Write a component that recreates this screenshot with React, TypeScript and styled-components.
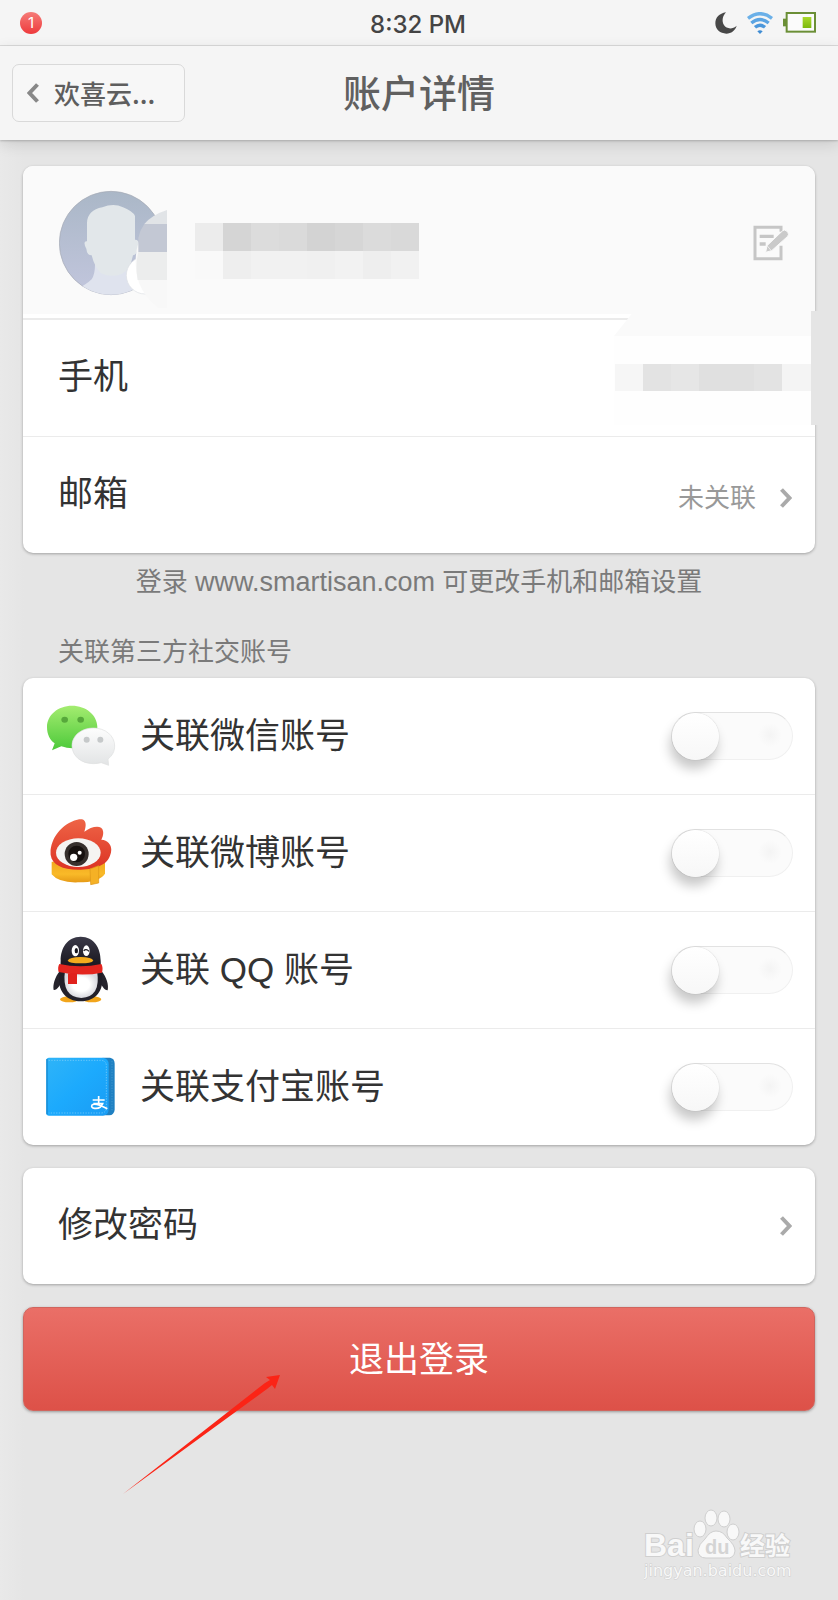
import React from "react";
import styled, { createGlobalStyle } from "styled-components";

const GlobalStyle = createGlobalStyle`
  * { box-sizing: border-box; }
  body {
    margin: 0;
    background: #e5e5e5;
    color: #333;
    font-family: "Liberation Sans", "Noto Sans CJK SC", sans-serif;
    -webkit-font-smoothing: antialiased;
  }
  h1, h2, p { margin: 0; }
  svg { display: block; flex: none; }
`;

const Page = styled.div`
  position: relative;
  min-height: 100vh;
  background: linear-gradient(90deg, #e9e9e9 0, #e5e5e5 24px, #e5e5e5 100%);
`;

const StatusBar = styled.div`
  display: grid;
  grid-template-columns: 1fr auto 1fr;
  align-items: center;
  height: 46px;
  padding: 0 22px 0 20px;
  background: #f5f5f5;
  border-bottom: 1px solid #dcdcdc;
`;

const Badge = styled.span`
  display: flex;
  align-items: center;
  justify-content: center;
  width: 22px;
  height: 22px;
  border-radius: 50%;
  background: linear-gradient(#f57c78, #ee3a3c);
  color: #fff;
  font: 15px/22px Inter, sans-serif;
`;

const Time = styled.time`
  padding-top: 4px;
  color: #444;
  font: 500 24px/30px Inter, sans-serif;
`;

const StatusIcons = styled.div`
  display: flex;
  align-items: center;
  justify-content: flex-end;
  gap: 10px;
`;

const Header = styled.header`
  position: relative;
  display: grid;
  grid-template-columns: 1fr auto 1fr;
  align-items: center;
  height: 94px;
  padding: 0 12px;
  background: #f5f5f5;
  box-shadow: 0 1px 2px rgba(0, 0, 0, 0.2), 0 4px 14px rgba(0, 0, 0, 0.12);
`;

const BackButton = styled.button`
  display: flex;
  align-items: center;
  justify-self: start;
  gap: 15px;
  width: 173px;
  height: 58px;
  padding: 0 14px;
  border: 1px solid #d9d9d9;
  border-radius: 7px;
  background: #f7f7f7;
  color: #5e5e5e;
  font: 500 26px/36px "Noto Sans CJK SC", sans-serif;
`;

const Title = styled.h1`
  padding-top: 2px;
  color: #606060;
  font-size: 38px;
  font-weight: 500;
  line-height: 54px;
`;

const Content = styled.main`
  display: flex;
  flex-direction: column;
  padding: 26px 23px 24px;
`;

const Card = styled.section`
  position: relative;
  border-radius: 10px;
  background: #fff;
  box-shadow: 0 1px 3px rgba(0, 0, 0, 0.3);
`;

const Row = styled.div<{ $inset?: number }>`
  position: relative;
  display: flex;
  align-items: center;
  justify-content: space-between;
  height: 117px;
  padding: 0 22px 0 ${(p) => p.$inset ?? 35}px;
  border-bottom: 1px solid #ebebeb;
  &:last-child {
    height: 116px;
    border-bottom: 0;
  }
`;

const ProfileRow = styled(Row)`
  height: 154px;
  padding-right: 26px;
  border-bottom: 2px solid #ebebeb;
  border-radius: 10px 10px 0 0;
  background: #fafafa;
  box-shadow: inset 0 -4px 0 #fff;
`;

const Profile = styled.div`
  display: flex;
  align-items: flex-start;
  gap: 24px;
  padding: 12px 0 0 1px;
`;

const NameBlock = styled.div`
  padding-top: 35px;
`;

const IconButton = styled.button`
  padding: 2px 0 0;
  border: 0;
  background: none;
`;

const Label = styled.span`
  padding-bottom: 2px;
  font-size: 35px;
  line-height: 50px;
`;

const SwitchLabel = styled.label`
  display: flex;
  align-items: center;
  gap: 24px;
  font-size: 35px;
  line-height: 50px;
`;

const Value = styled.span`
  display: flex;
  align-items: center;
  gap: 24px;
  padding: 6px 1px 0 0;
  color: #999;
  font-size: 26px;
  line-height: 38px;
`;

const MaskedPhone = styled.span`
  position: absolute;
  top: -9px;
  right: -23px;
`;

const Hint = styled.p`
  padding: 10px 0;
  color: #7a7a7a;
  font-size: 26px;
  line-height: 38px;
  text-align: center;
`;

const HintLink = styled.a`
  color: inherit;
  font-size: 27px;
  text-decoration: none;
`;

const SectionTitle = styled.h2`
  padding: 22px 36px 7px 35px;
  color: #7a7a7a;
  font-size: 26px;
  font-weight: 400;
  line-height: 38px;
`;

const Switch = styled.input`
  appearance: none;
  flex: none;
  width: 122px;
  height: 48px;
  margin: 0;
  border: 1px solid #f0f0f0;
  border-top-color: #e2e2e2;
  border-radius: 24px;
  background: radial-gradient(circle at 98px 22px, #f4f4f4 0, #fbfbfb 12px);
  &::before {
    content: "";
    display: block;
    width: 47px;
    height: 47px;
    border-radius: 50%;
    background: linear-gradient(#fff, #f7f7f7);
    box-shadow: 0 0 1px rgba(0, 0, 0, 0.3), -2px 9px 12px rgba(0, 0, 0, 0.22);
  }
  &:checked::before {
    margin-left: auto;
  }
`;

const Stack = styled.div`
  position: relative;
  display: flex;
  flex-direction: column;
  gap: 23px;
  padding-top: 23px;
`;

const NavButton = styled.button`
  display: flex;
  align-items: center;
  justify-content: space-between;
  width: 100%;
  height: 116px;
  padding: 0 23px 0 35px;
  border: 0;
  background: none;
  color: #333;
  font-family: inherit;
`;

const LogoutButton = styled.button`
  height: 104px;
  padding-top: 3px;
  border: 1px solid #d0655e;
  border-radius: 10px;
  background: linear-gradient(#ea6f67, #dd5148);
  box-shadow: 0 1px 3px rgba(0, 0, 0, 0.35);
  color: #fff;
  font: 35px/50px "Liberation Sans", "Noto Sans CJK SC", sans-serif;
`;

const Pointer = styled.svg`
  position: absolute;
  left: 100px;
  bottom: -84px;
  pointer-events: none;
`;

const Watermark = styled.svg`
  position: absolute;
  right: 38px;
  bottom: 15px;
`;

const Chevron = ({ back = false }: { back?: boolean }) => (
  <svg width="12" height="20" viewBox="0 0 12 20" fill="none" stroke={back ? "#888" : "#aaa"} strokeWidth="4">
    <path d={back ? "M10.5 1.5 2.5 10l8 8.5" : "M1.5 1.5 9.5 10l-8 8.5"} />
  </svg>
);

const MoonIcon = () => (
  <svg width="22" height="22" viewBox="0 0 64 64">
    <path d="M32 1C12 4 1 17 1 33C1 51 15 63 33 63C47 63 59 54 63 40C50 52 33 49 26 38C19 26 22 12 32 1Z" fill="#484848" />
  </svg>
);

const WifiIcon = () => (
  <svg width="26" height="22" viewBox="0 0 78 66" fill="none" strokeWidth="10">
    <path d="M3 19Q39-9 75 19" stroke="#6bb0e8" />
    <path d="M13 33Q39 12 65 33" stroke="#5ba4e2" />
    <path d="M24 46Q39 33 54 46" stroke="#4c97db" />
    <path d="M31 58Q39 51 47 58L39 66Z" fill="#3f8cd3" stroke="none" />
  </svg>
);

const BatteryIcon = () => (
  <svg width="33" height="21" viewBox="0 0 99 63">
    <defs>
      <linearGradient id="charge" x1="0" y1="0" x2="0" y2="1">
        <stop offset="0" stopColor="#a9d92c" />
        <stop offset="1" stopColor="#7db80c" />
      </linearGradient>
    </defs>
    <path d="M0 20h9v23H0z" fill="#6b8f36" />
    <rect x="11" y="3" width="85" height="56" fill="#fbfbfb" stroke="#6b8f36" strokeWidth="6" />
    <rect x="59" y="15" width="26" height="33" fill="url(#charge)" />
  </svg>
);

const EditIcon = () => (
  <svg width="36" height="36" viewBox="0 0 108 108">
    <path d="M84 62V101H6V7H84V20" fill="none" stroke="#c6c6c6" strokeWidth="9" />
    <path d="M20 34h42M20 57h18" stroke="#c6c6c6" strokeWidth="10" />
    <path d="m38 82 4-20 46-44q6-6 13 0l4 5q4 6-2 12L56 77Z" fill="#cacaca" stroke="#fafafa" strokeWidth="3" />
    <path d="m42 62 13 15" stroke="#fafafa" strokeWidth="2" />
  </svg>
);

const Avatar = () => (
  <svg width="112" height="120" viewBox="0 0 336 360">
    <defs>
      <linearGradient id="avatarBack" x1="0" y1="0" x2="0" y2="1">
        <stop offset="0" stopColor="#aab7c7" />
        <stop offset="1" stopColor="#c2c6dd" />
      </linearGradient>
      <clipPath id="avatarClip">
        <circle cx="156" cy="165" r="155" />
      </clipPath>
    </defs>
    <circle cx="156" cy="165" r="155" fill="url(#avatarBack)" stroke="#a5a9b3" strokeWidth="2" />
    <g clipPath="url(#avatarClip)">
      <path d="M50 306Q84 288 98 274Q108 258 108 230L216 230V284Q250 300 290 320V350H50Z" fill="#dfe3ee" />
      <path d="M84 104Q86 66 130 58Q164 44 192 58Q222 70 228 84V155Q244 154 236 180Q234 202 222 202Q214 246 188 258Q156 270 126 256Q106 236 98 202Q84 202 82 182Q70 158 84 160Z" fill="#e2e7ea" />
    </g>
    <circle cx="258" cy="262" r="56" fill="#fff" stroke="#dcdfe4" strokeWidth="2" />
    <path d="M324 66V360H300Q232 310 230 230Q226 120 324 66Z" fill="#f8f8f8" />
    <path d="M238 150V192H324V108H256Q242 128 238 150Z" fill="#c3c8d4" />
    <path d="M324 66V108H256Q280 80 324 66Z" fill="#e1e4e7" />
    <path d="M238 192H324V276H236Q228 230 238 192Z" fill="#eceded" />
  </svg>
);

const nameTop = ["#ececec", "#d5d5d5", "#dcdcdc", "#dadada", "#d3d3d3", "#d6d6d6", "#dbdbdb", "#d9d9d9"];
const nameBottom = ["#f9f9f9", "#eeeeee", "#f1f1f1", "#f1f1f1", "#f0f0f0", "#f2f2f2", "#eeeeee", "#f1f1f1"];

const MaskedName = () => (
  <svg width="224" height="56" viewBox="0 0 224 56" role="img" aria-label="用户名">
    {nameTop.map((c, i) => (
      <rect key={i} x={i * 28} width="28" height="28" fill={c} />
    ))}
    {nameBottom.map((c, i) => (
      <rect key={i} x={i * 28} y="28" width="28" height="28" fill={c} />
    ))}
  </svg>
);

const MaskedNumber = () => (
  <svg width="226" height="114" viewBox="0 0 226 114" role="img" aria-label="手机号">
    <path d="M22 0H199V25H2Z" fill="#fafafa" />
    <path d="M2 25H199V114H2Z" fill="#fefefe" />
    <path d="M3 53H31V80H3z" fill="#f6f6f6" />
    <path d="M31 53H170V80H31z" fill="#e3e3e3" />
    <path d="M59 53H87V80H59z" fill="#e6e6e6" />
    <path d="M87 53H142V80H87z" fill="#e0e0e0" />
    <path d="M170 53H199V80H170z" fill="#f4f4f4" />
    <path d="M199 0H226V114H199z" fill="#e5e5e5" />
  </svg>
);

const WechatIcon = () => (
  <svg width="70" height="70" viewBox="80 95 210 210">
    <defs>
      <linearGradient id="wxGreen" x1="0" y1="0" x2="0" y2="1">
        <stop offset="0" stopColor="#a4ec70" />
        <stop offset="1" stopColor="#4cc93a" />
      </linearGradient>
      <linearGradient id="wxWhite" x1="0" y1="0" x2="0" y2="1">
        <stop offset="0" stopColor="#fdfdfd" />
        <stop offset="1" stopColor="#e2e4e5" />
      </linearGradient>
    </defs>
    <path d="M158 109C116 109 83 137 83 173C83 195 92 212 106 222L98 243L126 231C137 235 148 237 160 237C202 237 234 208 234 173C234 137 200 109 158 109Z" fill="url(#wxGreen)" />
    <ellipse cx="136" cy="151" rx="10" ry="9" fill="#57a83b" />
    <ellipse cx="184" cy="151" rx="10" ry="9" fill="#57a83b" />
    <path d="M222 176C186 176 158 199 158 229C158 260 186 283 222 283C230 283 238 282 246 280L268 288L266 269C279 259 286 246 286 230C286 199 258 176 222 176Z" fill="url(#wxWhite)" stroke="#dedfe0" strokeWidth="2" />
    <circle cx="202" cy="211" r="9" fill="#c6c9ca" />
    <circle cx="243" cy="211" r="9" fill="#c6c9ca" />
  </svg>
);

const WeiboIcon = () => (
  <svg width="70" height="70" viewBox="80 445 210 210">
    <defs>
      <linearGradient id="wbRed" x1="0" y1="0" x2="0" y2="1">
        <stop offset="0" stopColor="#ee6446" />
        <stop offset="1" stopColor="#dc3324" />
      </linearGradient>
      <linearGradient id="wbGold" x1="0" y1="0" x2="0" y2="1">
        <stop offset="0" stopColor="#f2a81e" />
        <stop offset="0.6" stopColor="#f9ba28" />
        <stop offset="1" stopColor="#e69a16" />
      </linearGradient>
    </defs>
    <path d="M97 576V614Q118 640 176 638Q240 638 257 612V576Z" fill="url(#wbGold)" />
    <path d="M94 556C90 512 124 462 174 450C198 444 204 458 195 486C216 470 248 464 251 484C253 494 250 502 246 510C272 512 282 534 272 558C262 588 222 600 176 600C130 600 98 586 94 556Z" fill="url(#wbRed)" />
    <ellipse cx="177" cy="549" rx="67" ry="43" fill="#f5f4f2" />
    <circle cx="172" cy="553" r="36" fill="#37302d" />
    <circle cx="172" cy="553" r="25" fill="#17110f" />
    <circle cx="163" cy="563" r="11" fill="#fff" />
    <circle cx="181" cy="549" r="6" fill="#fff" />
    <path d="M212 598L238 588V640L214 645Z" fill="#f5b125" stroke="#dd9518" strokeWidth="2" />
  </svg>
);

const QQIcon = () => (
  <svg width="70" height="70" viewBox="80 105 210 210">
    <defs>
      <radialGradient id="qqBelly">
        <stop offset="0.5" stopColor="#fff" />
        <stop offset="1" stopColor="#d8d8de" />
      </radialGradient>
      <linearGradient id="qqBody" x1="0" y1="0" x2="0" y2="1">
        <stop offset="0" stopColor="#3a3947" />
        <stop offset="0.4" stopColor="#1d1b24" />
        <stop offset="1" stopColor="#24222c" />
      </linearGradient>
    </defs>
    <ellipse cx="150" cy="298" rx="28" ry="9" fill="#f2a51b" />
    <ellipse cx="218" cy="298" rx="28" ry="9" fill="#f2a51b" />
    <path d="M122 212C106 232 100 254 103 270C112 272 122 256 130 240ZM246 212C262 232 269 254 265 271C256 272 246 256 238 240Z" fill="#25232c" />
    <path d="M184 110C144 110 124 144 124 182C124 196 122 206 120 222C112 270 140 304 184 304C230 304 256 270 248 222C246 206 244 196 244 182C244 144 224 110 184 110Z" fill="url(#qqBody)" />
    <path d="M137 212H233Q246 290 186 294Q126 290 137 212Z" fill="url(#qqBelly)" />
    <ellipse cx="168" cy="152" rx="11" ry="17" fill="#fff" />
    <ellipse cx="201" cy="152" rx="10" ry="16" fill="#fff" />
    <ellipse cx="171" cy="152" rx="5" ry="8" fill="#17151c" />
    <path d="M193 152Q201 145 209 154" fill="none" stroke="#17151c" strokeWidth="4" />
    <path d="M145 182Q150 171 184 171Q218 171 222 182Q216 190 184 190Q150 190 145 182Z" fill="#f4ab1d" />
    <path d="M120 192Q184 206 246 192Q252 202 248 218Q186 230 118 216Q114 202 120 192Z" fill="#e3251f" />
    <path d="M146 220H173V252H146Z" fill="#e0211c" />
  </svg>
);

const WalletIcon = () => (
  <svg width="70" height="70" viewBox="80 453 210 210">
    <defs>
      <linearGradient id="wallet" x1="0" y1="0" x2="1" y2="1">
        <stop offset="0" stopColor="#2fb4f8" />
        <stop offset="0.5" stopColor="#1caafd" />
        <stop offset="1" stopColor="#1a9cf4" />
      </linearGradient>
    </defs>
    <path d="M250 470H272Q286 472 286 488V626Q284 642 270 643H250Z" fill="#1f80c2" />
    <path d="M278 480V632" stroke="#4fa3d6" strokeWidth="2" strokeDasharray="4 4" />
    <path d="M89 470H250Q268 472 268 490V624Q268 642 250 644H89Q81 644 81 636V478Q81 470 89 470Z" fill="url(#wallet)" />
    <path d="M88 478H246Q261 480 261 494V622Q260 635 246 636H88" fill="none" stroke="#8bd3fb" strokeWidth="2" strokeDasharray="4 4" />
    <path d="M83 474V640" stroke="#1789d0" strokeWidth="4" />
    <path d="M220 597H256M238 585V607M222 608H250Q244 624 226 622Q214 620 218 612Q226 604 264 623" fill="none" stroke="#fff" strokeWidth="5" />
  </svg>
);

const accounts = [
  { id: "wechat", label: "关联微信账号", Icon: WechatIcon },
  { id: "weibo", label: "关联微博账号", Icon: WeiboIcon },
  { id: "qq", label: "关联 QQ 账号", Icon: QQIcon },
  { id: "alipay", label: "关联支付宝账号", Icon: WalletIcon },
];

export default function App() {
  return (
    <Page>
      <GlobalStyle />
      <StatusBar>
        <Badge>1</Badge>
        <Time>8:32 PM</Time>
        <StatusIcons>
          <MoonIcon />
          <WifiIcon />
          <BatteryIcon />
        </StatusIcons>
      </StatusBar>
      <Header>
        <BackButton type="button">
          <Chevron back />
          欢喜云...
        </BackButton>
        <Title>账户详情</Title>
      </Header>
      <Content>
        <Card>
          <ProfileRow>
            <Profile>
              <Avatar />
              <NameBlock>
                <MaskedName />
              </NameBlock>
            </Profile>
            <IconButton type="button" aria-label="编辑">
              <EditIcon />
            </IconButton>
          </ProfileRow>
          <Row>
            <Label>手机</Label>
            <MaskedPhone>
              <MaskedNumber />
            </MaskedPhone>
          </Row>
          <Row>
            <Label>邮箱</Label>
            <Value>
              未关联
              <Chevron />
            </Value>
          </Row>
        </Card>
        <Hint>
          登录 <HintLink href="#">www.smartisan.com</HintLink> 可更改手机和邮箱设置
        </Hint>
        <SectionTitle>关联第三方社交账号</SectionTitle>
        <Card>
          {accounts.map(({ id, label, Icon }) => (
            <Row key={id} $inset={23}>
              <SwitchLabel htmlFor={id}>
                <Icon />
                {label}
              </SwitchLabel>
              <Switch type="checkbox" role="switch" id={id} />
            </Row>
          ))}
        </Card>
        <Stack>
          <Card>
            <NavButton type="button">
              <Label>修改密码</Label>
              <Chevron />
            </NavButton>
          </Card>
          <LogoutButton type="button">退出登录</LogoutButton>
          <Pointer width="158" height="122" viewBox="0 0 158 122">
            <path d="M0 121 142 10 147 7 143 4 157 2 152 16 149 12 144 16Z" fill="#fb2416" />
          </Pointer>
        </Stack>
      </Content>
      <Watermark width="156" height="80" viewBox="0 0 156 80" fill="#f8f8f8" stroke="#cfcfcf" strokeWidth="1">
        <g paintOrder="stroke">
          <text x="0" y="51" fontFamily="Liberation Sans" fontWeight="700" fontSize="32" strokeWidth="2">Bai</text>
          <text x="96" y="50" fontFamily="Noto Sans CJK SC" fontWeight="700" fontSize="25" strokeWidth="2">经验</text>
          <text x="0" y="71" fontFamily="DejaVu Sans" fontSize="16" strokeWidth="1">jingyan.baidu.com</text>
        </g>
        <ellipse cx="56" cy="24" rx="6" ry="8" />
        <ellipse cx="67" cy="13" rx="6" ry="8" />
        <ellipse cx="80" cy="14" rx="6" ry="8" />
        <ellipse cx="89" cy="27" rx="6" ry="8" />
        <path d="M72 26Q79 26 83 33Q91 40 91 46Q90 54 82 53H62Q54 53 54 45Q55 39 61 34Q66 26 72 26Z" />
        <text x="61" y="49" fontFamily="Liberation Sans" fontSize="20" fontWeight="700" fill="#d4d4d4" stroke="none">du</text>
      </Watermark>
    </Page>
  );
}
